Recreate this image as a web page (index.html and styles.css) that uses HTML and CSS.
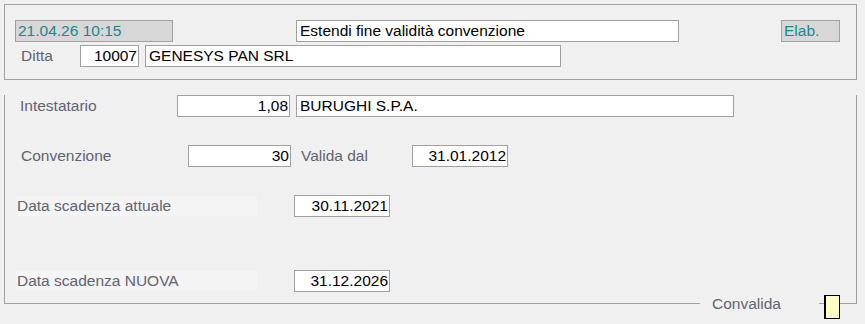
FILE: index.html
```html
<!DOCTYPE html>
<html lang="it">
  <head>
    <meta charset="UTF-8" />
    <meta name="viewport" content="width=device-width, initial-scale=1.0" />
    <title>Estendi fine validità convenzione</title>
    <link rel="stylesheet" href="styles.css">
  </head>
  <body>
    <div class="form">
      <div class="head">
        <div class="row row-top">
          <div class="field field-gray f-date">21.04.26 10:15</div>
          <div class="field f-title">Estendi fine validità convenzione</div>
          <div class="field field-gray f-elab">Elab.</div>
        </div>
        <div class="row row-ditta">
          <span class="label l-ditta">Ditta</span>
          <div class="field num f-ditta">10007</div>
          <div class="field f-ragione">GENESYS PAN SRL</div>
        </div>
      </div>

      <div class="body">
        <div class="row row-intest">
          <span class="label l-intest">Intestatario</span>
          <div class="field num f-intest">1,08</div>
          <div class="field f-nome">BURUGHI S.P.A.</div>
        </div>
        <div class="row row-conv">
          <span class="label l-conv">Convenzione</span>
          <div class="field num f-conv">30</div>
          <span class="label l-valida">Valida dal</span>
          <div class="field num f-data">31.01.2012</div>
        </div>
        <div class="row row-attuale">
          <span class="label label-box">Data scadenza attuale</span>
          <div class="field num f-scad">30.11.2021</div>
        </div>
        <div class="row row-nuova">
          <span class="label label-box">Data scadenza NUOVA</span>
          <div class="field num f-scad">31.12.2026</div>
        </div>
      </div>

      <div class="footer">
        <span class="label l-convalida">Convalida</span>
        <div class="check"></div>
      </div>
    </div>
  </body>
</html>
```

FILE: styles.css
```css
* {
  box-sizing: border-box;
}
body {
  margin: 0;
  background: #f0f0f0;
  font-family: "Liberation Sans", Arial, sans-serif;
  font-size: 15.5px;
}
.form {
  width: 853px;
  margin: 4px 0 0 4px;
}
.head {
  height: 76px;
  border: 1px solid #a0a0a0;
}
.body {
  border: 1px solid #a0a0a0;
  border-top: none;
  padding-bottom: 11px;
}
.row {
  display: flex;
  align-items: center;
}
/* --------------- campi */
.field {
  height: 22px;
  line-height: 20px;
  border: 1px solid #a0a0a0;
  background: #fff;
  color: #000;
  padding: 0 3px;
  white-space: nowrap;
  overflow: hidden;
}
.field-gray {
  background: #d7d7d7;
  color: #17888e;
  padding: 0 2px;
}
.num {
  text-align: right;
  padding: 0 1px 0 2px;
}
.label {
  color: #5f6470;
  white-space: nowrap;
}
/* --------------- testata */
.row-top {
  margin-top: 15px;
}
.f-date {
  margin-left: 10px;
  width: 158px;
}
.f-title {
  margin-left: 123px;
  width: 383px;
}
.f-elab {
  margin-left: 102px;
  width: 59px;
}
.row-ditta {
  margin-top: 3px;
}
.l-ditta {
  margin-left: 16px;
  width: 59px;
}
.f-ditta {
  width: 59px;
}
.f-ragione {
  margin-left: 6px;
  width: 416px;
}
/* --------------- corpo */
.row-intest {
  margin-top: 15px;
}
.l-intest {
  margin-left: 15px;
  width: 157px;
}
.f-intest {
  width: 113px;
}
.f-nome {
  margin-left: 6px;
  width: 438px;
}
.row-conv {
  margin-top: 28px;
}
.l-conv {
  margin-left: 16px;
  width: 167px;
}
.f-conv {
  width: 103px;
}
.l-valida {
  margin-left: 10px;
  width: 111px;
}
.f-data {
  width: 96px;
}
.row-attuale {
  margin-top: 28px;
}
.row-nuova {
  margin-top: 53px;
}
.label-box {
  margin-left: 11px;
  width: 241px;
  height: 20px;
  line-height: 20px;
  padding-left: 1px;
  background: #f4f4f4;
}
.f-scad {
  margin-left: 37px;
  width: 96px;
}
/* --------------- piede */
.footer {
  display: flex;
  align-items: flex-start;
  margin-top: -9px;
}
.l-convalida {
  margin-left: 696px;
  width: 119px;
  height: 18px;
  line-height: 18px;
  padding-left: 12px;
  background: #f0f0f0;
}
.check {
  margin-left: 5px;
  width: 16px;
  height: 24px;
  border: 1px solid #000;
  border-left-width: 2px;
  background: #ffffc4;
}
```
